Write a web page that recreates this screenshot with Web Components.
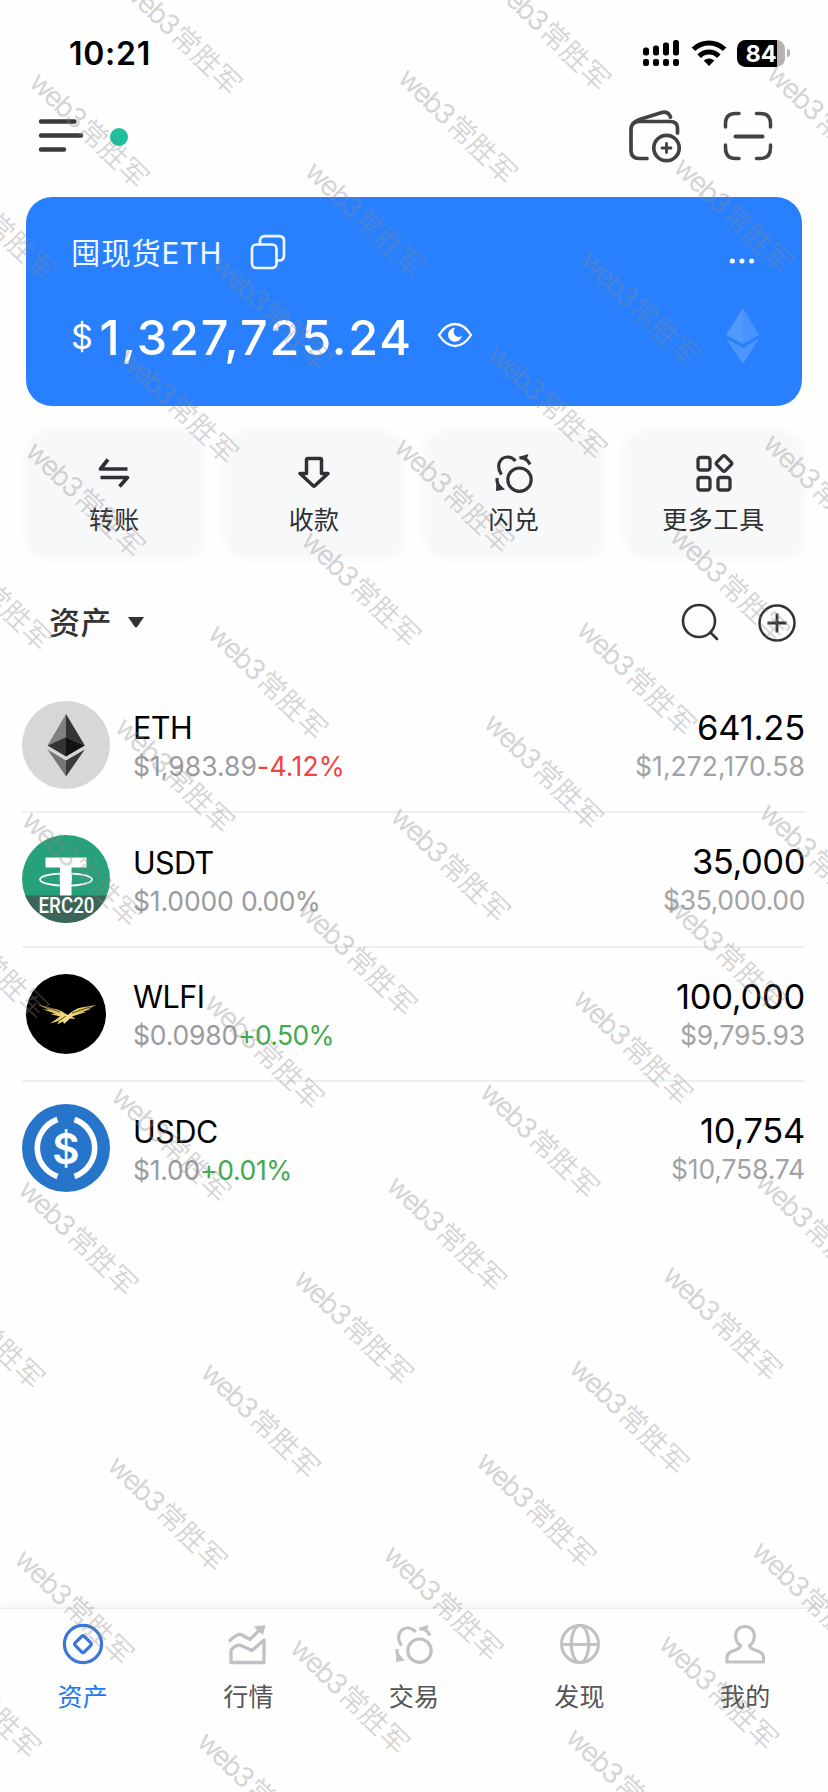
<!DOCTYPE html>
<html lang="zh-CN">
<head>
<meta charset="utf-8">
<title>资产</title>
<style>
html,body{margin:0;padding:0;background:#fefefe}
body{width:828px;height:1792px;overflow:hidden;font-family:Inter,"Noto Sans CJK SC",sans-serif}
</style>
</head>
<body>
<wallet-app></wallet-app>
<script>
const ICONS = {
  menu: [48,34,`<g stroke="#3a3a3c" stroke-width="4.400" stroke-linecap="round"><path d="M4 2.500H37.500M4 16.500H44M4 30.500H27"/></g>`],
  walletAdd: [54,54,`<g fill="none" stroke="#424244" stroke-width="3.700" stroke-linecap="round" stroke-linejoin="round"><path d="M20 49.500H12Q4 49.500 4 41.500V21Q4 12.500 12 12.500H43Q50.500 12.500 50.500 19V24"/><path d="M6 15Q8 12 14 10L34 3.800Q41 1.500 43.500 8"/><circle cx="39.500" cy="39" r="12.700"/><path d="M39.500 34.500V43.500M35 39H44" stroke-width="2.800"/></g>`],
  scan: [50,50,`<g fill="none" stroke="#424244" stroke-width="3.500" stroke-linecap="round"><path d="M2.500 16V12.500Q2.500 2.500 12.500 2.500H16M33.500 2.500H37Q47.500 2.500 47.500 12.500V16M47.500 34V37Q47.500 47.500 37 47.500H33.500M16 47.500H12.500Q2.500 47.500 2.500 37V34"/><path d="M12.500 25.500H39.500" stroke-width="4"/></g>`],
  signal: [37,28,`<g><rect x="0" y="8.500" width="6" height="8" rx="2.500"/><rect x="10" y="6.500" width="6" height="10" rx="2.500"/><rect x="20" y="3.500" width="6" height="13" rx="2.500"/><rect x="30" y="1" width="6" height="15.500" rx="2.500"/><rect x="0" y="20" width="6" height="7" rx="2.300"/><rect x="10" y="20" width="6" height="7" rx="2.300"/><rect x="20" y="20" width="6" height="7" rx="2.300"/><rect x="30" y="20" width="6" height="7" rx="2.300"/></g>`],
  wifi: [36,28,`<g fill="none" stroke="#000" stroke-width="5"><path d="M2.400 10.200A22.500 22.500 0 0 1 33.600 10.200"/><path d="M8.200 17.300A13.500 13.500 0 0 1 27.800 17.300"/></g><path d="M12.700 21.500Q18 17.500 23.300 21.500L18 27Z"/>`],
  copy: [36,36,`<g fill="none" stroke="#fff" stroke-width="2.700" stroke-opacity=".93"><rect x="2" y="10.500" width="24.500" height="23.500" rx="4.500"/><path d="M10 10V7Q10 2.200 15 2.200H29Q34 2.200 34 7V21.500Q34 26.500 29 26.500H27"/></g>`],
  eye: [36,26,`<path d="M2 13Q9 2 18 2Q27 2 34 13Q27 24 18 24Q9 24 2 13Z" fill="none" stroke="#fff" stroke-width="2.300" stroke-linejoin="round"/><path d="M18.500 5.800A7 7 0 1 0 25 13.800A4.400 4.400 0 0 1 18.500 5.800Z" fill="#fff"/>`],
  dots: [26,8,`<g fill="#fff"><circle cx="3.400" cy="4" r="2.500"/><circle cx="13" cy="4" r="2.500"/><circle cx="22.600" cy="4" r="2.500"/></g>`],
  ethFaint: [34,56,`<path d="M17 0L33 27L17 36L0 27Z" fill="#fff" opacity=".15"/><path d="M17 0V36L0 27Z" fill="#fff" opacity=".05"/><path d="M0 30.500L17 40L33 30.500L17 56Z" fill="#fff" opacity=".17"/>`],
  transfer: [32,32,`<path d="M10 2.500L2.500 12H29.500M2.500 20.500H29.500L21.500 29.500" fill="none" stroke="#2f3033" stroke-width="3.700" stroke-linejoin="round"/>`],
  receive: [34,34,`<path d="M9.500 4Q9.500 2.500 11 2.500H23Q24.500 2.500 24.500 4V17.500H31L17.800 29.800Q17 30.500 16.200 29.800L3 17.500H9.500Z" fill="none" stroke="#2f3033" stroke-width="3.500" stroke-linejoin="round"/>`],
  swap: [40,40,`<g fill="none" stroke="currentColor" stroke-width="3.200" stroke-linecap="butt"><circle cx="25.500" cy="26.700" r="11.700"/><path d="M7.500 21.500C1.500 13 6 4 13.500 4Q18.500 4 21.500 8"/><path d="M25.500 5Q33 4.500 36 11.500"/><path d="M3 25Q2.500 31.500 7 35.500"/></g><path d="M24.500 4L34.500 1L32.500 7ZM2.500 28.500L11 36.500L2 38Z" fill="currentColor"/>`],
  tools: [40,40,`<g fill="none" stroke="#333438" stroke-width="3.300" stroke-linejoin="round"><rect x="4" y="4.500" width="12" height="12.500" rx="2.500"/><rect x="4" y="24.500" width="12" height="12.500" rx="2.500"/><rect x="24" y="24.500" width="12" height="12.500" rx="2.500"/><rect x="24" y="4.500" width="12" height="12" rx="2" transform="rotate(45 30 10.500)"/></g>`],
  search: [40,40,`<g fill="none" stroke="#333" stroke-width="2.600" stroke-linecap="round"><circle cx="18" cy="18" r="16"/><path d="M29.500 29.500L36 36"/></g>`],
  plus: [40,40,`<g fill="none" stroke="#333" stroke-width="2.500"><circle cx="20" cy="20" r="17.500"/><path d="M20 10.500V29.500M10.500 20H29.500" stroke-width="2.800"/></g>`],
  caret: [18,12,`<path d="M1 0H17L10.500 9.500Q9 11.500 7.500 9.500Z" fill="#333"/>`],
  assets: [42,42,`<g fill="none" stroke="#3b76d9" stroke-linejoin="round"><circle cx="21" cy="21" r="18.600" stroke-width="3.200"/><rect x="14.700" y="14.700" width="12.800" height="12.800" rx="2" transform="rotate(45 21 21)" stroke-width="3.200"/></g>`],
  market: [42,42,`<g fill="none" stroke="#bfc2c5" stroke-width="3.300"><path d="M4 39.500V27Q9.500 21 14 22.500L25 27.500L37 17V39.500Z" stroke-linejoin="round"/><path d="M2 18.500Q11 9 15 12L23 16.500L34.500 5"/></g><path d="M26.500 3.500L38.500 2L36 12Z" fill="#bfc2c5"/>`],
  globe: [42,42,`<g fill="none" stroke="#bfc2c5" stroke-width="3"><circle cx="21" cy="21" r="18.500"/><ellipse cx="21" cy="21" rx="8.700" ry="18.500"/><path d="M2.500 21.500H39.500"/></g>`],
  person: [42,42,`<path d="M16.500 22.500C9.500 18.500 9.500 3.500 21 3.500S32.500 18.500 25.500 22.500Q25.500 25 31 27Q39.500 29.500 39.500 34V39H3V34Q3 29.500 11.500 27Q16.500 25 16.500 22.500Z" fill="none" stroke="#bfc2c5" stroke-width="3.200" stroke-linejoin="round"/>`],
  coinEth: [88,88,`<circle cx="44" cy="44" r="44" fill="#d7d7d7"/><path d="M44 13L25.500 44.500L44 36Z" fill="#818181"/><path d="M44 13L62.800 44.500L44 36Z" fill="#343434"/><path d="M44 36L25.500 44.500L44 55.500Z" fill="#343434"/><path d="M44 36L62.800 44.500L44 55.500Z" fill="#131313"/><path d="M25.500 48.500L44 59.500V75.500Z" fill="#757575"/><path d="M62.800 48.500L44 59.500V75.500Z" fill="#3a3a3a"/>`],
  coinUsdt: [88,88,`<defs><clipPath id="c"><circle cx="44" cy="44" r="44"/></clipPath></defs><g clip-path="url(#c)"><rect width="88" height="88" fill="#26a17b"/><path d="M23.500 22.500H64.500V32.500H49.500V62H38V32.500H23.500Z" fill="#fff"/><ellipse cx="44" cy="44.500" rx="26" ry="6.200" fill="none" stroke="#fff" stroke-width="1.700"/><path d="M37.800 39V47.200H49.700V39Z" fill="#fff"/><rect y="60.500" width="88" height="28" fill="#3c6458"/></g><text x="16.500" y="78" font-family="Roboto" font-size="21.500" font-weight="500" textLength="56" lengthAdjust="spacingAndGlyphs" fill="#fff">ERC20</text>`],
  coinWlfi: [88,88,`<defs><linearGradient id="g"><stop offset="0" stop-color="#b99a3f"/><stop offset=".5" stop-color="#f7e389"/><stop offset="1" stop-color="#c2a346"/></linearGradient></defs><circle cx="44" cy="44" r="40" fill="#000"/><path d="M15 34.500L31 38.500Q38 39.500 43 43.500L46 45Q52 39 59 37.500L74.500 35L66 39L70 38.500L61 42L64 42L50 46.500L53.500 49L48 48.500L42 54L41 51.500L35 54.500L37 51L28 53.500L38 46.500L28 44L33 43.500L21 39.500L27 39.500Z" fill="url(#g)"/><path d="M24 37L38 42M50 43L68 37M35 52L44 46" stroke="#3a2e0c" stroke-width=".8"/>`],
  coinUsdc: [88,88,`<circle cx="44" cy="44" r="44" fill="#2775ca"/><g fill="none" stroke="#fff" stroke-width="5.600"><path d="M35.500 15.500A30.200 30.200 0 0 0 35.500 72.500"/><path d="M52.500 15.500A30.200 30.200 0 0 1 52.500 72.500"/></g><text x="44" y="59.800" text-anchor="middle" font-family="Inter" font-size="42" font-weight="600" fill="#fff">$</text>`]
};

const define = (name, html, ready) => customElements.define(name, class extends HTMLElement {
  connectedCallback() {
    if (this.shadowRoot) return;
    const root = this.attachShadow({mode: 'open'});
    const t = document.createElement('template');
    t.innerHTML = typeof html === 'function' ? html(this) : html;
    root.append(t.content.cloneNode(true));
    if (ready) ready(this, root);
  }
});

define('ui-icon', el => {
  const [w, h, body] = ICONS[el.getAttribute('name')];
  return `<style>:host{display:block;flex:none;width:${w}px;height:${h}px}svg{display:block;overflow:visible}</style><svg width="${w}" height="${h}" viewBox="0 0 ${w} ${h}">${body}</svg>`;
});

/* Inline label whose tracking is adjusted so that its advance is exactly `w` pixels. */
define('ui-text', el => `<style>:host{display:inline-block;white-space:pre;font-size:${el.getAttribute('s')}px}</style><slot></slot>`, el => {
  const w = parseFloat(el.getAttribute('w'));
  if (!w) return;
  const n = [...el.textContent].length;
  const natural = el.getBoundingClientRect().width;
  el.style.letterSpacing = ((w - natural) / n).toFixed(3) + 'px';
});

define('status-bar', `<style>
:host{display:flex;height:80px;box-sizing:border-box;padding:26px 38px 0 69px;justify-content:space-between;align-items:center}
.time{font-weight:600;color:#000}
.r{display:flex;align-items:center;gap:10.500px}
.bat{display:flex;align-items:center;gap:2px}
.cell{width:48px;height:27px;border-radius:8.500px;background:linear-gradient(90deg,#000 83%,#b3b3b3 83%);display:flex;align-items:center;justify-content:center;color:#fff;font-weight:700}
.tip{width:3px;height:8px;border-radius:0 3px 3px 0;background:#b3b3b3}
</style><ui-text class="time" s="32" w="82">10:21</ui-text><div class="r"><ui-icon name="signal"></ui-icon><ui-icon name="wifi"></ui-icon><div class="bat"><div class="cell"><ui-text s="23.500" w="31">84</ui-text></div><div class="tip"></div></div></div>`);

define('top-bar', `<style>
:host{display:flex;height:117px;box-sizing:border-box;padding:0 55.500px 5px 37px;align-items:center}
.dot{width:18px;height:18px;border-radius:50%;background:#1fbf9b;margin-left:25px;position:relative;top:1px}
.r{margin-left:auto;display:flex;gap:41.500px;align-items:center}
</style><ui-icon name="menu"></ui-icon><div class="dot"></div><div class="r"><ui-icon name="walletAdd"></ui-icon><ui-icon name="scan"></ui-icon></div>`);

define('balance-card', `<style>
:host{display:block;box-sizing:border-box;margin:0 26px;width:776px;height:208.500px;border-radius:26px;background:#2880ff;color:#fff;padding:34px 42px 0 45px}
.a,.b{display:flex;align-items:center}
.a{height:42px}
.name{color:#f1f7ff;position:relative;top:-1px}
.a ui-icon[name=copy]{margin-left:27.500px}
.a ui-icon[name=dots]{margin:17px 5px 0 auto}
.b{height:60px;margin-top:34.500px}
.cur{line-height:48px;position:relative;top:-.5px}.amt{font-weight:450;margin-left:6.500px;line-height:60px}
.b ui-icon[name=eye]{margin:-6px 0 0 24px}
.b ui-icon[name=ethFaint]{margin:-3px 0 0 auto}
</style><div class="a"><ui-text class="name" s="29.500" w="151">囤现货ETH</ui-text><ui-icon name="copy"></ui-icon><ui-icon name="dots"></ui-icon></div>
<div class="b"><ui-text class="cur" s="34" w="22">$</ui-text><ui-text class="amt" s="48.500" w="313.500">1,327,725.24</ui-text><ui-icon name="eye"></ui-icon><ui-icon name="ethFaint"></ui-icon></div>`);

define('action-tile', el => `<style>
:host{display:flex;flex-direction:column;align-items:center;height:124px;border-radius:22px;background:#f7f8fa;box-shadow:0 0 8px 3px #f7f8fa;color:#333438}
.i{height:40px;margin-top:20px;display:flex;align-items:center}
.l{margin-top:8px;line-height:38px;color:#2f3033}
</style><div class="i"><ui-icon name="${el.getAttribute('icon')}"></ui-icon></div><ui-text class="l" s="25" w="${el.getAttribute('w')}">${el.getAttribute('label')}</ui-text>`);

define('action-row', `<style>:host{display:grid;grid-template-columns:repeat(4,1fr);gap:24px;padding:27.500px 26.500px 0 26.500px}</style>
<action-tile icon="transfer" label="转账" w="51"></action-tile><action-tile icon="receive" label="收款" w="51"></action-tile><action-tile icon="swap" label="闪兑" w="51"></action-tile><action-tile icon="tools" label="更多工具" w="103"></action-tile>`);

define('section-head', `<style>
:host{display:flex;align-items:center;height:56px;margin-top:38px;padding:0 31px 0 49px}
.t{font-weight:500;color:#333;position:relative;top:-2.500px}
ui-icon[name=caret]{margin-left:15px}
.r{margin-left:auto;display:flex;gap:36px;align-items:center}
</style><ui-text class="t" s="31" w="63">资产</ui-text><ui-icon name="caret"></ui-icon><div class="r"><ui-icon name="search"></ui-icon><ui-icon name="plus"></ui-icon></div>`);

define('asset-row', el => { const a = n => el.getAttribute(n); return `<style>
:host{display:flex;box-sizing:border-box;height:134.500px;margin:0 23px 0 22px;align-items:center;border-bottom:2px solid ${a('last') === null ? '#efefef' : 'transparent'}}
.m{margin-left:23px;flex:1;display:flex;flex-direction:column;align-items:flex-start;padding-top:1px}
.v{display:flex;flex-direction:column;align-items:flex-end}
.n,.q{color:#000;line-height:42px}
.s{line-height:34px;color:#9b9b9f;display:flex}
.up{color:#41aa4d}.down{color:#f0433d}.flat{color:#9b9b9f}
.u{color:#a3a3a6;line-height:34px}
</style><ui-icon name="${a('icon')}"></ui-icon>
<div class="m"><ui-text class="n" s="30.500" w="${a('nw')}">${a('name')}</ui-text><div class="s"><ui-text s="26.500" w="${a('pw')}">${a('price')}</ui-text><ui-text class="${a('dir')}" s="26.500" w="${a('cw')}">${a('change')}</ui-text></div></div>
<div class="v"><ui-text class="q" s="34.500" w="${a('qw')}">${a('qty')}</ui-text><ui-text class="u" s="26.500" w="${a('uw')}">${a('usd')}</ui-text></div>`; });

define('asset-list', `<style>:host{display:block;margin-top:27.500px}</style>
<asset-row icon="coinEth" name="ETH" nw="59" price="$1,983.89" pw="124" change="-4.12%" cw="88" dir="down" qty="641.25" qw="108" usd="$1,272,170.58" uw="170"></asset-row>
<asset-row icon="coinUsdt" name="USDT" nw="80.500" price="$1.0000 " pw="108" change="0.00%" cw="79" dir="flat" qty="35,000" qw="113" usd="$35,000.00" uw="142"></asset-row>
<asset-row icon="coinWlfi" name="WLFI" nw="71.500" price="$0.0980" pw="105" change="+0.50%" cw="96" dir="up" qty="100,000" qw="129" usd="$9,795.93" uw="125"></asset-row>
<asset-row icon="coinUsdc" name="USDC" nw="85" price="$1.00" pw="67" change="+0.01%" cw="92" dir="up" qty="10,754" qw="105" usd="$10,758.74" uw="134" last></asset-row>`);

define('tab-item', el => `<style>
:host{display:flex;flex-direction:column;align-items:center;color:#bfc2c5;padding-top:14px}
.i{height:42px;display:flex;align-items:center}
.l{margin-top:13px;line-height:38px;color:${el.hasAttribute('active') ? '#1a7af0' : '#555'}}
</style><div class="i"><ui-icon name="${el.getAttribute('icon')}"></ui-icon></div><ui-text class="l" s="25" w="50.500">${el.getAttribute('label')}</ui-text>`);

define('tab-bar', `<style>:host{display:grid;grid-template-columns:repeat(5,1fr);height:183px;margin-top:auto;background:#fefefe;box-shadow:0 -1px 2px rgba(0,0,0,.06),0 -4px 12px rgba(0,0,0,.045)}</style>
<tab-item icon="assets" label="资产" active></tab-item><tab-item icon="market" label="行情"></tab-item><tab-item icon="swap" label="交易"></tab-item><tab-item icon="globe" label="发现"></tab-item><tab-item icon="person" label="我的"></tab-item>`);

/* Diagonal watermark repeated on a slightly tilted square lattice. */
define('water-mark', () => {
  let out = '';
  for (let m = -6; m <= 9; m++) for (let n = -10; n <= 32; n++) {
    const x = 27.5 + m * 368.7 - n * 93.1, y = 84 - m * 4 + n * 93.3;
    if (x > -125 && x < 826 && y > -118 && y < 1790)
      out += `<text transform="translate(${x.toFixed(1)} ${y.toFixed(1)}) rotate(44.2)"><tspan class="l" textLength="67" lengthAdjust="spacing">web3</tspan><tspan x="68">常胜军</tspan></text>`;
  }
  return `<style>:host{position:absolute;inset:0;overflow:hidden;pointer-events:none}svg{display:block}text{font:350 28px "Noto Sans CJK SC",sans-serif;fill:rgba(135,135,135,.36)}.l{font-family:Inter,sans-serif;font-weight:400}</style><svg width="828" height="1792">${out}</svg>`;
});

define('wallet-app', `<style>:host{position:relative;display:flex;flex-direction:column;width:828px;height:1792px;overflow:hidden;background:#fefefe}</style>
<status-bar></status-bar><top-bar></top-bar><balance-card></balance-card><action-row></action-row><section-head></section-head><asset-list></asset-list><tab-bar></tab-bar><water-mark></water-mark>`);
</script>
</body>
</html>
